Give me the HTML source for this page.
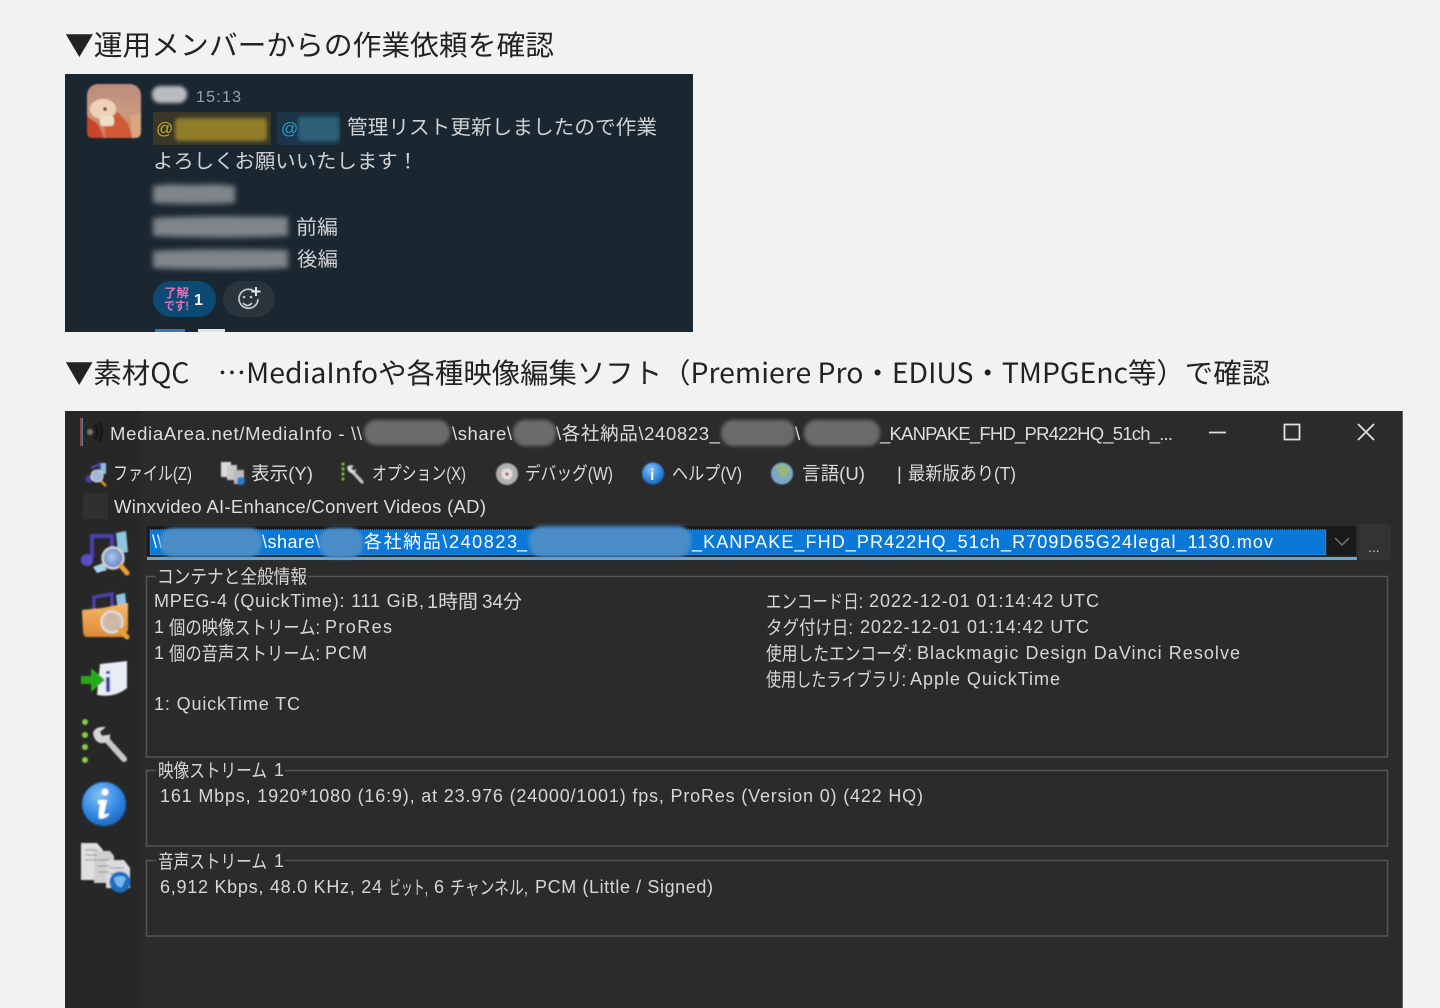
<!DOCTYPE html>
<html lang="ja"><head><meta charset="utf-8"><title>QC</title>
<style>
html,body{margin:0;padding:0;background:#f2f2f2;width:1440px;height:1008px;overflow:hidden}
svg{display:block;position:absolute;left:0;top:0}
text{font-family:"Liberation Sans","Noto Sans CJK JP",sans-serif;white-space:pre}
.h{font-family:"Noto Sans CJK JP","Liberation Sans",sans-serif;font-size:28px;fill:#222}
.s{font-size:20px;fill:#cfd1d2}
.m{font-size:18.500px;fill:#dcdcdc}
.b{font-size:19px;fill:#d6d6d6}
.l{font-size:18px;fill:#d6d6d6}
.w{font-size:18px;fill:#fff}
</style></head><body>
<svg width="1440" height="1008" viewBox="0 0 1440 1008" xmlns="http://www.w3.org/2000/svg">
<defs>
<filter id="bl" x="-30%" y="-50%" width="160%" height="200%"><feGaussianBlur stdDeviation="1.800"/></filter>
<filter id="bs" x="-30%" y="-50%" width="160%" height="200%"><feGaussianBlur stdDeviation="2.600"/></filter>
<filter id="ic" x="-10%" y="-10%" width="120%" height="120%"><feGaussianBlur stdDeviation=".7"/></filter>
<filter id="tx" x="-2%" y="-30%" width="104%" height="160%"><feGaussianBlur stdDeviation=".35"/></filter>
<radialGradient id="ib" cx=".4" cy=".3" r=".8"><stop offset="0" stop-color="#7fc0f5"/><stop offset=".6" stop-color="#2f86e0"/><stop offset="1" stop-color="#1a5cb0"/></radialGradient>
<linearGradient id="av" x1="0" y1="0" x2="0" y2="1"><stop offset="0" stop-color="#b98c7a"/><stop offset=".5" stop-color="#c99a80"/><stop offset="1" stop-color="#d07a55"/></linearGradient>
<linearGradient id="fo" x1="0" y1="0" x2="0" y2="1"><stop offset="0" stop-color="#f4b868"/><stop offset="1" stop-color="#de8a34"/></linearGradient>
<radialGradient id="le" cx=".45" cy=".45" r=".6"><stop offset="0" stop-color="#b0c8e8"/><stop offset="1" stop-color="#5a7cc0"/></radialGradient>
</defs>

<text class="h" x="65" y="55" textLength="489" lengthAdjust="spacingAndGlyphs">▼運用メンバーからの作業依頼を確認</text>
<text class="h" x="65" y="383" textLength="1205" lengthAdjust="spacingAndGlyphs">▼素材QC　…MediaInfoや各種映像編集ソフト（Premiere Pro・EDIUS・TMPGEnc等）で確認</text>

<!-- Slack -->
<rect x="65" y="74" width="628" height="258" fill="#1a2630"/>
<g filter="url(#ic)">
<rect x="87" y="84" width="54" height="54" rx="11" fill="url(#av)"/>
<path d="M87 116L98 124L104 138H92Q87 138 87 132Z" fill="#c8452a"/>
<path d="M104 124L118 112L128 124L132 138H106Z" fill="#cf5a35"/>
<path d="M130 116L141 112V132Q141 138 135 138H132Z" fill="#d9a67e"/>
<ellipse cx="103" cy="109" rx="13" ry="10" fill="#eed2b8"/>
<rect x="100" y="116" width="14" height="10" rx="3" fill="#f0dfc8"/>
<circle cx="105" cy="109" r="1.800" fill="#5a2015"/>
</g>
<rect x="152" y="86" width="35" height="17" rx="8" fill="#b9bcbf" filter="url(#bl)"/>
<text x="196" y="102" font-size="16" fill="#9aa3a9" textLength="45" lengthAdjust="spacing">15:13</text>
<rect x="153" y="112" width="118" height="33" fill="#37372a"/>
<rect x="277" y="112" width="63" height="33" fill="#1a3547"/>
<text x="156" y="134" font-size="17" fill="#c8a92e">@</text>
<text x="281" y="134" font-size="17" fill="#2f9ac8">@</text>
<rect x="175" y="118" width="92" height="23" rx="4" fill="#8f7d2a" filter="url(#bl)"/>
<rect x="298" y="117" width="41" height="24" rx="3" fill="#2f6078" filter="url(#bl)"/>
<g filter="url(#tx)">
<text class="s" x="347" y="134" textLength="310" lengthAdjust="spacingAndGlyphs">管理リスト更新しましたので作業</text>
<text class="s" x="153" y="168" textLength="265" lengthAdjust="spacingAndGlyphs">よろしくお願いいたします！</text>
<text class="s" x="296" y="234" textLength="42" lengthAdjust="spacingAndGlyphs">前編</text>
<text class="s" x="297" y="266" textLength="41" lengthAdjust="spacingAndGlyphs">後編</text>
</g>
<path d="M153 186Q170 183 190 185Q215 183 235 186V203Q200 205 153 203Z" fill="#7f8589" filter="url(#bs)"/>
<path d="M153 218Q200 215 288 217V236Q220 239 153 236Z" fill="#7f8589" filter="url(#bs)"/>
<path d="M153 251Q200 248 288 250V268Q220 271 153 268Z" fill="#7f8589" filter="url(#bs)"/>
<rect x="153" y="281" width="63" height="36" rx="18" fill="#0d4a73"/>
<rect x="223" y="281" width="52" height="36" rx="18" fill="#2a343c"/>
<text x="164" y="297" font-size="12" font-weight="700" fill="#e86fb8" textLength="25" lengthAdjust="spacingAndGlyphs">了解</text>
<text x="164" y="310" font-size="12" font-weight="700" fill="#e86fb8" textLength="25" lengthAdjust="spacingAndGlyphs">です!</text>
<text x="194" y="305" font-size="16" font-weight="700" fill="#f0f4f6">1</text>
<g fill="none" stroke="#c4c8cb" stroke-width="1.700">
<path d="M254 291A9.500 9.500 0 1 0 258 299"/>
<path d="M243 303Q247.500 308 252 303"/>
<path d="M256 287V296M251.500 291.500H260.500" stroke-width="2" stroke="#e3e5e6"/>
</g>
<circle cx="244" cy="297" r="1.300" fill="#c4c8cb"/><circle cx="251" cy="297" r="1.300" fill="#c4c8cb"/>
<rect x="155" y="329" width="30" height="3" fill="#3b78b5"/>
<rect x="198" y="329" width="27" height="3" fill="#e0e4e6"/>

<!-- MediaInfo window -->
<rect x="65" y="411" width="1337.500" height="597" fill="#2b2b2b"/>
<rect x="65" y="411" width="76" height="597" fill="#272727"/>
<rect x="1402" y="411" width="1" height="597" fill="#666"/>
<rect x="80" y="418" width="1.500" height="28" fill="#a03a30"/>
<rect x="81.500" y="418" width="1.500" height="28" fill="#3a7fa8"/>
<g filter="url(#ic)" fill="none" stroke="#0e0e0e" stroke-width="2"><circle cx="90" cy="432" r="3" fill="#777" stroke="none"/><path d="M95 425Q100 432 95 439M99 422Q105 432 99 442"/></g>

<g filter="url(#tx)">
<text class="m" x="110" y="440" textLength="252" lengthAdjust="spacing">MediaArea.net/MediaInfo - \\</text>
<text class="m" x="452" y="440" textLength="60" lengthAdjust="spacing">\share\</text>
<text class="m" x="556" y="440" textLength="164" lengthAdjust="spacing">\各社納品\240823_</text>
<text class="m" x="795" y="440" textLength="8" lengthAdjust="spacing">\</text>
<text class="m" x="880" y="440" textLength="293" lengthAdjust="spacing">_KANPAKE_FHD_PR422HQ_51ch_...</text>
</g>
<rect x="364" y="420" width="86" height="25" rx="12" fill="#6a6a6a" filter="url(#bl)"/>
<rect x="513" y="420" width="43" height="26" rx="12" fill="#6a6a6a" filter="url(#bl)"/>
<rect x="721" y="420" width="74" height="26" rx="12" fill="#6a6a6a" filter="url(#bl)"/>
<rect x="804" y="420" width="76" height="26" rx="12" fill="#6a6a6a" filter="url(#bl)"/>

<g fill="none" stroke="#e0e0e0" stroke-width="1.800">
<path d="M1209 432.500H1226"/>
<rect x="1284.500" y="424.500" width="15" height="15"/>
<path d="M1358 424L1374 440M1374 424L1358 440"/>
</g>

<g filter="url(#tx)">
<text class="m" x="113" y="480" textLength="79" lengthAdjust="spacingAndGlyphs">ファイル(Z)</text>
<text class="m" x="251" y="480" textLength="62" lengthAdjust="spacingAndGlyphs">表示(Y)</text>
<text class="m" x="372" y="480" textLength="94" lengthAdjust="spacingAndGlyphs">オプション(X)</text>
<text class="m" x="525" y="480" textLength="88" lengthAdjust="spacingAndGlyphs">デバッグ(W)</text>
<text class="m" x="672" y="480" textLength="70" lengthAdjust="spacingAndGlyphs">ヘルプ(V)</text>
<text class="m" x="802" y="480" textLength="63" lengthAdjust="spacingAndGlyphs">言語(U)</text>
<text class="m" x="897" y="480">|</text>
<text class="m" x="908" y="480" textLength="108" lengthAdjust="spacingAndGlyphs">最新版あり(T)</text>
<text class="m" x="114" y="513" textLength="372" lengthAdjust="spacing">Winxvideo AI-Enhance/Convert Videos (AD)</text>
</g>

<!-- small toolbar icons -->
<g filter="url(#ic)">
<path d="M91 468L100 464V476" fill="none" stroke="#4f45b0" stroke-width="2.500"/><circle cx="89" cy="479" r="3.500" fill="#4a3fa8"/>
<rect x="101" y="463" width="5" height="11" fill="#8fc0e0"/>
<circle cx="97" cy="476" r="6" fill="#9fb8d8" stroke="#ddd"/><path d="M101 481L106 486" stroke="#e89a30" stroke-width="2.500"/>
<rect x="221" y="462" width="10" height="15" fill="#dadada"/><rect x="227" y="465" width="10" height="15" fill="#c8c8c8"/><rect x="234" y="470" width="10" height="14" fill="#bbb"/><circle cx="241" cy="481" r="4" fill="#2f78c8"/>
<circle cx="343" cy="464" r="1.500" fill="#8ac84a"/><circle cx="343" cy="469" r="1.500" fill="#8ac84a"/><circle cx="343" cy="474" r="1.500" fill="#8ac84a"/><circle cx="343" cy="479" r="1.500" fill="#8ac84a"/>
<path d="M351 470L362 482" stroke="#c8c8c8" stroke-width="3.200" stroke-linecap="round"/><path d="M347 467Q350 464 354 466L351 468L353 471L356 469Q356 474 351 473Q348 472 347 467Z" fill="#ddd"/>
<circle cx="507" cy="474" r="11" fill="#b0b0b0"/><circle cx="507" cy="474" r="5.500" fill="#e8e0e0"/><circle cx="507" cy="474" r="1.800" fill="#b05050"/>
<circle cx="653" cy="473.500" r="11" fill="url(#ib)"/>
<circle cx="782" cy="473.500" r="11" fill="#7aa8c8"/><path d="M776 466Q786 462 790 470Q786 480 780 476Z" fill="#9ab878"/>
</g>
<text x="650" y="480" font-size="16" font-weight="700" fill="#fff" font-family="Liberation Serif">i</text>

<rect x="83" y="493" width="25" height="26" fill="#303030"/>

<!-- combo -->
<rect x="147" y="526" width="1209" height="30" fill="#191919"/>
<rect x="150" y="530" width="1176" height="25" fill="#0a78d7"/>
<rect x="150" y="529.500" width="1176" height="25.500" fill="none" stroke="#bbb" stroke-width="1" stroke-dasharray="1 1" opacity=".5"/>
<rect x="147" y="557" width="1210" height="3" fill="#5fa8d8"/>
<path d="M1335 538L1342 545L1349 538" fill="none" stroke="#666" stroke-width="1.800"/>
<rect x="1358" y="524" width="33" height="36" rx="4" fill="#333"/>
<text x="1368" y="552" font-size="14" fill="#c8c8c8">...</text>
<g filter="url(#tx)">
<text class="w" x="152" y="548">\\</text>
<text class="w" x="262" y="548" textLength="58" lengthAdjust="spacing">\share\</text>
<text class="w" x="364" y="548" textLength="153" lengthAdjust="spacing">各社納品\240823</text>
<text class="w" x="517" y="548">_</text>
<text class="w" x="692" y="548" textLength="581" lengthAdjust="spacing">_KANPAKE_FHD_PR422HQ_51ch_R709D65G24legal_1130.mov</text>
</g>
<rect x="160" y="528" width="102" height="29" rx="13" fill="#4a8cc8" filter="url(#bl)"/>
<rect x="319" y="528" width="44" height="30" rx="13" fill="#4a8cc8" filter="url(#bl)"/>
<rect x="529" y="526" width="162" height="31" rx="13" fill="#4a8cc8" filter="url(#bl)"/>

<!-- Group boxes -->
<g fill="none" stroke="#555" stroke-width="1.500">
<path d="M156 576.500H146.500V757H1387.500V576.500H308"/>
<path d="M156 770.500H146.500V846H1387.500V770.500H285"/>
<path d="M156 860.500H146.500V936H1387.500V860.500H285"/>
</g>
<g filter="url(#tx)">
<text class="b" x="157" y="583" textLength="150" lengthAdjust="spacingAndGlyphs">コンテナと全般情報</text>
<text class="b" x="158" y="777" textLength="109" lengthAdjust="spacingAndGlyphs">映像ストリーム</text>
<text class="l" x="274" y="776">1</text>
<text class="b" x="158" y="868" textLength="109" lengthAdjust="spacingAndGlyphs">音声ストリーム</text>
<text class="l" x="274" y="867">1</text>

<text class="l" x="154" y="607" textLength="270" lengthAdjust="spacing">MPEG-4 (QuickTime): 111 GiB,</text>
<text class="b" x="427" y="608" textLength="51" lengthAdjust="spacingAndGlyphs">1時間</text>
<text class="b" x="482" y="608" textLength="40" lengthAdjust="spacingAndGlyphs">34分</text>
<text class="l" x="154" y="633">1</text>
<text class="b" x="169" y="634" textLength="151" lengthAdjust="spacingAndGlyphs">個の映像ストリーム:</text>
<text class="l" x="325" y="633" textLength="67" lengthAdjust="spacing">ProRes</text>
<text class="l" x="154" y="659">1</text>
<text class="b" x="169" y="660" textLength="151" lengthAdjust="spacingAndGlyphs">個の音声ストリーム:</text>
<text class="l" x="325" y="659" textLength="42" lengthAdjust="spacing">PCM</text>
<text class="l" x="154" y="710" textLength="146" lengthAdjust="spacing">1: QuickTime TC</text>

<text class="b" x="766" y="608" textLength="97" lengthAdjust="spacingAndGlyphs">エンコード日:</text>
<text class="l" x="869" y="607" textLength="230" lengthAdjust="spacing">2022-12-01 01:14:42 UTC</text>
<text class="b" x="766" y="634" textLength="87" lengthAdjust="spacingAndGlyphs">タグ付け日:</text>
<text class="l" x="860" y="633" textLength="229" lengthAdjust="spacing">2022-12-01 01:14:42 UTC</text>
<text class="b" x="766" y="660" textLength="146" lengthAdjust="spacingAndGlyphs">使用したエンコーダ:</text>
<text class="l" x="917" y="659" textLength="323" lengthAdjust="spacing">Blackmagic Design DaVinci Resolve</text>
<text class="b" x="766" y="686" textLength="140" lengthAdjust="spacingAndGlyphs">使用したライブラリ:</text>
<text class="l" x="910" y="685" textLength="150" lengthAdjust="spacing">Apple QuickTime</text>

<text class="l" x="160" y="802" textLength="763" lengthAdjust="spacing">161 Mbps, 1920*1080 (16:9), at 23.976 (24000/1001) fps, ProRes (Version 0) (422 HQ)</text>
<text class="l" x="160" y="893" textLength="222" lengthAdjust="spacing">6,912 Kbps, 48.0 KHz, 24</text>
<text class="b" x="389" y="894" textLength="39" lengthAdjust="spacingAndGlyphs">ビット,</text>
<text class="l" x="434" y="893">6</text>
<text class="b" x="450" y="894" textLength="78" lengthAdjust="spacingAndGlyphs">チャンネル,</text>
<text class="l" x="535" y="893" textLength="178" lengthAdjust="spacing">PCM (Little / Signed)</text>
</g>

<!-- Sidebar icons -->
<g filter="url(#ic)">
<!-- music + lens -->
<path d="M92 558V536H112V552" fill="none" stroke="#4a3fb0" stroke-width="4"/>
<circle cx="87" cy="560" r="6" fill="#5a4fc8"/>
<path d="M116 533L126 531L128 552L118 554Z" fill="#8fc4e0"/>
<path d="M93 567L103 563L107 570L97 573Z" fill="#a8d4e8"/>
<circle cx="113" cy="558" r="10.500" fill="url(#le)" stroke="#d0d0d0" stroke-width="2.500"/>
<path d="M121 566L127 573" stroke="#e8a030" stroke-width="5" stroke-linecap="round"/>
<!-- folder -->
<path d="M94 610V597L112 594V608" fill="none" stroke="#4a3fb0" stroke-width="3.500"/>
<path d="M116 595L125 593L127 610L118 610Z" fill="#8fc4e0"/>
<path d="M82 610L102 608L128 603V630L124 637L88 637Q83 637 83 631Z" fill="url(#fo)"/>
<circle cx="112" cy="622" r="10.500" fill="#cdb8a8" stroke="#ddd" stroke-width="2.500"/>
<path d="M120 630L127 637" stroke="#e8a030" stroke-width="5" stroke-linecap="round"/>
<!-- arrow + i -->
<path d="M100 664L127 661V688Q115 698 97 695Z" fill="#e8ecf4"/>
<path d="M81 676H91V668L105 680L91 692V684H81Z" fill="#2ca81f"/>
<text x="104" y="692" font-size="29" font-weight="700" fill="#3a45a8" font-family="Liberation Serif">i</text>
<!-- wrench -->
<circle cx="85" cy="722" r="3" fill="#8ac84a"/><circle cx="85" cy="735" r="3" fill="#8ac84a"/><circle cx="85" cy="747" r="3" fill="#8ac84a"/><circle cx="85" cy="760" r="3" fill="#8ac84a"/>
<path d="M105 738L124 759" stroke="#c8c8c8" stroke-width="6" stroke-linecap="round"/>
<path d="M93 733Q95 726 106 727L100 732L103 737L110 734Q111 744 100 743Q94 741 93 733Z" fill="#d4d4d4"/>
<!-- info -->
<circle cx="104" cy="804" r="22" fill="url(#ib)" stroke="#1a5090" stroke-width="1"/>
<circle cx="105" cy="792" r="3.500" fill="#fff"/>
<path d="M98 800H107L104 814Q106 815 109 813L108 816Q102 820 99 818Q98 816 100 804H98Z" fill="#fff"/>
<!-- docs -->
<path d="M81 843H97L103 850V880H81Z" fill="#e0e0e0"/>
<path d="M94 851H110L114 856V883H94Z" fill="#cfcfcf"/>
<path d="M106 860H124L130 868V888H106Z" fill="#dcdcdc"/>
<path d="M85 850H97M85 855H97M85 860H97M98 860H109M98 866H109M98 872H109M110 868H124M110 874H124" stroke="#888" stroke-width="1"/>
<circle cx="120" cy="882" r="10.500" fill="#1f6ec0"/>
<path d="M114 878Q120 874 126 878L122 887Q116 888 114 878Z" fill="#7ab8e8"/>
</g>
</svg>
</body></html>
